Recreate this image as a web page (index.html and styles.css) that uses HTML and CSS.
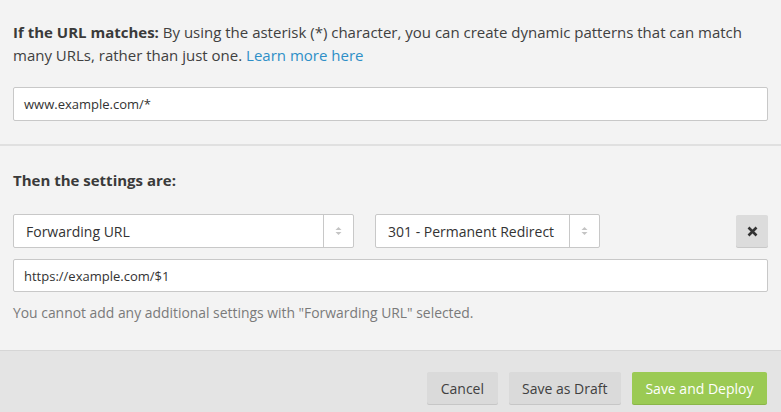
FILE: index.html
```html
<!DOCTYPE html>
<html>
<head>
<meta charset="utf-8">
<link rel="stylesheet" href="styles.css">
</head>
<body>
<div class="page">
  <section class="match">
    <p class="intro"><strong>If the URL matches:</strong> By using the asterisk (*) character, you can create dynamic patterns that can match many URLs, rather than just one. <a href="#">Learn more here</a></p>
    <div class="field">www.example.com/*</div>
  </section>
  <section class="settings">
    <h3 class="heading">Then the settings are:</h3>
    <div class="row">
      <div class="select sel-1"><span class="sel-text">Forwarding URL</span><span class="arrows"><svg width="9" height="12" viewBox="0 0 9 12"><path d="M1.5 5 L4.5 2 L7.5 5 Z" fill="#c4c4c4"/><path d="M1.5 7 L4.5 10 L7.5 7 Z" fill="#c4c4c4"/></svg></span></div>
      <div class="select sel-2"><span class="sel-text">301 - Permanent Redirect</span><span class="arrows"><svg width="9" height="12" viewBox="0 0 9 12"><path d="M1.5 5 L4.5 2 L7.5 5 Z" fill="#c4c4c4"/><path d="M1.5 7 L4.5 10 L7.5 7 Z" fill="#c4c4c4"/></svg></span></div>
      <div class="spacer"></div>
      <button class="remove"><svg width="11" height="11" viewBox="0 0 11 11"><path d="M1.5 1.5 L9.5 9.5 M9.5 1.5 L1.5 9.5" stroke="#333" stroke-width="2.6"/></svg></button>
    </div>
    <div class="field field-2">https://example.com/$1</div>
    <p class="note">You cannot add any additional settings with "Forwarding URL" selected.</p>
  </section>
  <footer class="actions">
    <button class="btn">Cancel</button>
    <button class="btn">Save as Draft</button>
    <button class="btn btn-primary">Save and Deploy</button>
  </footer>
</div>
</body>
</html>
```

FILE: styles.css
```css
* { box-sizing: border-box; }
html, body { margin: 0; padding: 0; }
body {
  font-family: "Open Sans", "Liberation Sans", sans-serif;
  background: #f3f3f3;
  color: #333;
  width: 781px;
  height: 412px;
  overflow: hidden;
}
.page { display: flex; flex-direction: column; height: 412px; }
.match {
  padding: 21px 13px 23px 13px;
  border-bottom: 2px solid #e0e0e0;
}
.intro {
  margin: 0 0 20px 0;
  font-size: 15px;
  line-height: 23px;
  color: #404040;
}
.intro strong { color: #3a3a3a; font-weight: 700; }
.intro a { color: #2e8fc7; text-decoration: none; }
.field {
  height: 34px;
  background: #fff;
  border: 1px solid #c8c8c8;
  border-radius: 2px;
  padding: 0 10px;
  display: flex;
  align-items: center;
  font-size: 13px;
  color: #333;
}
.settings { padding: 21px 13px 0 13px; flex: 1; }
.heading {
  margin: 0 0 21px 0;
  font-size: 15px;
  font-weight: 700;
  line-height: 26px;
  color: #3a3a3a;
}
.row { display: flex; align-items: center; gap: 21px; }
.select {
  height: 34px;
  background: #fff;
  border: 1px solid #c8c8c8;
  border-radius: 2px;
  display: flex;
  align-items: stretch;
  font-size: 14px;
  color: #333;
}
.sel-1 { width: 341px; }
.sel-2 { width: 225px; }
.sel-text { flex: 1; display: flex; align-items: center; padding-left: 12px; }
.arrows {
  width: 30px;
  border-left: 1px solid #c8c8c8;
  display: flex;
  align-items: center;
  justify-content: center;
}
.spacer { flex: 1; }
.remove {
  width: 32px;
  height: 32px;
  border: none;
  border-radius: 2px;
  background: #dcdcdc;
  box-shadow: 0 1px 0 #c8c8c8;
  display: flex;
  align-items: center;
  justify-content: center;
  padding: 0;
}
.field-2 { margin-top: 11px; height: 33px; }
.note {
  margin: 11px 0 0 0;
  font-size: 13.9px;
  line-height: 20px;
  color: #7a7a7a;
}
.actions {
  height: 62px;
  background: #e4e4e4;
  border-top: 1px solid #d6d6d6;
  display: flex;
  justify-content: flex-end;
  align-items: flex-start;
  gap: 11px;
  padding: 21px 14px 0 0;
}
.btn {
  font-family: "Open Sans", "Liberation Sans", sans-serif;
  font-size: 14px;
  height: 32px;
  padding: 0 13.5px;
  border: none;
  border-radius: 2px;
  background: #dadada;
  color: #404040;
  box-shadow: 0 1px 0 #c6c6c6;
}
.btn-primary {
  background: #9bca54;
  color: #fff;
  box-shadow: 0 1px 0 #8ab648;
}
```
